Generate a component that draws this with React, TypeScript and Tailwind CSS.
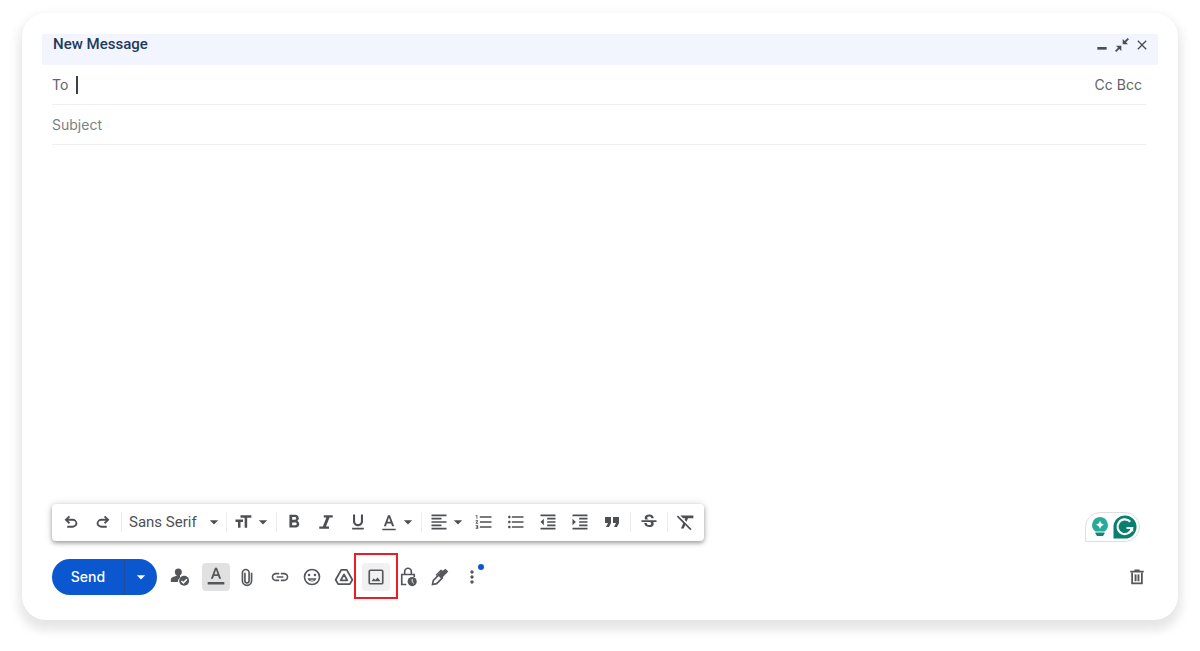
import React from 'react';
import {
  MdArrowDropDown,
  MdClose,
  MdFormatAlignLeft,
  MdFormatBold,
  MdFormatClear,
  MdFormatIndentDecrease,
  MdFormatIndentIncrease,
  MdFormatListBulleted,
  MdFormatListNumbered,
  MdFormatQuote,
  MdFormatSize,
  MdFormatUnderlined,
  MdLink,
  MdMoreVert,
  MdStrikethroughS,
} from 'react-icons/md';

interface IconButtonProps {
  label: string;
  className?: string;
  children: React.ReactNode;
}

const IconButton: React.FC<IconButtonProps> = ({ label, className = 'w-8', children }) => (
  <button type="button" aria-label={label} className={`flex h-7 shrink-0 items-center justify-center ${className}`}>
    {children}
  </button>
);

const Icon: React.FC<{ className?: string; children: React.ReactNode }> = ({ className = 'size-5', children }) => (
  <svg viewBox="0 0 24 24" fill="currentColor" className={`shrink-0 ${className}`} aria-hidden="true">
    {children}
  </svg>
);

const Separator = () => <span className="h-5 w-px shrink-0 bg-[#ececec]" />;

const UndoPath = () => (
  <path d="M7 19.500v-2.500h7.100q1.575 0 2.738-1T18 13.500t-1.162-2.500T14.100 10.200H8.300l2.500 2.500L9 14.500 3.500 9 9 3.500l1.800 1.800L8.300 7.800h5.800q2.700 0 4.400 1.700T20.500 13.500t-2 4.200T14.100 19.500z" />
);

const Header = () => (
  <header className="flex h-[31px] items-start justify-between bg-[#f2f5fd] pr-1.5 pl-[11px]">
    <h1 className="font-['Roboto',sans-serif] text-[15px] leading-5 font-medium text-[#1f3a5c]">New Message</h1>
    <div className="flex h-[22px] items-center text-[#4b4d50]">
      <button type="button" aria-label="Minimize" className="flex w-5 justify-center">
        <Icon className="size-4">
          <path d="M5 15h14v4H5z" />
        </Icon>
      </button>
      <button type="button" aria-label="Exit full screen" className="flex w-5 justify-center">
        <Icon className="size-4">
          <path d="M13 11V3l3 3L20.500 1.500l2 2L18 8l3 3zM11 13v8l-3-3L3.500 22.500l-2-2L6 16l-3-3z" />
        </Icon>
      </button>
      <button type="button" aria-label="Close" className="flex w-5 justify-center">
        <MdClose className="size-4 stroke-current" />
      </button>
    </div>
  </header>
);

const Fields = () => (
  <div className="mr-3 ml-[10px] text-sm text-[#5f6368]">
    <div className="flex h-10 items-center border-b border-[#efefef]">
      <label htmlFor="to">To</label>
      <span className="ml-2 h-[18px] w-0.5 bg-[#3c4043]" />
      <input id="to" type="text" className="min-w-0 flex-1 outline-none" />
      <div className="flex gap-1 pr-1">
        <button type="button">Cc</button>
        <button type="button">Bcc</button>
      </div>
    </div>
    <div className="flex h-10 items-center border-b border-[#efefef]">
      <input
        type="text"
        aria-label="Subject"
        placeholder="Subject"
        className="w-full outline-none placeholder:text-[#7c7f83]"
      />
    </div>
  </div>
);

const FormatToolbar = () => (
  <div
    role="toolbar"
    aria-label="Formatting options"
    className="flex h-[37px] items-center rounded-sm bg-white pr-px pb-px pl-[3px] text-[#4d4f52] shadow-[0_2px_4px_rgba(0,0,0,0.35),0_0_10px_rgba(0,0,0,0.12)]"
  >
    <IconButton label="Undo">
      <Icon className="size-[18px]">
        <UndoPath />
      </Icon>
    </IconButton>
    <IconButton label="Redo" className="mr-0.5 w-8">
      <Icon className="size-[18px] -scale-x-100">
        <UndoPath />
      </Icon>
    </IconButton>
    <Separator />
    <div className="relative">
      <select
        aria-label="Font"
        className="h-7 w-[104px] appearance-none pl-[7px] font-['Roboto',sans-serif] text-[15px] outline-none"
      >
        <option>Sans Serif</option>
      </select>
      <MdArrowDropDown className="pointer-events-none absolute top-1 right-0.5 size-5" />
    </div>
    <Separator />
    <IconButton label="Size" className="w-[49px] pl-0.5">
      <MdFormatSize className="size-5" />
      <MdArrowDropDown className="size-5" />
    </IconButton>
    <Separator />
    <IconButton label="Bold" className="ml-px w-8">
      <MdFormatBold className="size-[22px]" />
    </IconButton>
    <IconButton label="Italic">
      <Icon className="size-[18px]">
        <path d="M9 3h12v3h-4.300L12 18h4v3H3v-3h4.800L12.500 6H9z" />
      </Icon>
    </IconButton>
    <IconButton label="Underline">
      <MdFormatUnderlined className="size-5" />
    </IconButton>
    <IconButton label="Text color" className="w-[47px] pl-0.5">
      <Icon>
        <path d="M4 20h16v2H4zM10.800 4h2.400l5 13h-2.500l-1.200-3.300h-5L8.300 17H5.800zM10.200 11.600h3.600L12 6.700z" />
      </Icon>
      <MdArrowDropDown className="-ml-px size-5" />
    </IconButton>
    <Separator />
    <IconButton label="Align" className="w-[46px] pl-1.5">
      <MdFormatAlignLeft className="size-5" />
      <MdArrowDropDown className="-ml-px size-5" />
    </IconButton>
    <IconButton label="Numbered list">
      <MdFormatListNumbered className="size-5" />
    </IconButton>
    <IconButton label="Bulleted list">
      <MdFormatListBulleted className="size-5" />
    </IconButton>
    <IconButton label="Indent less">
      <MdFormatIndentDecrease className="size-5" />
    </IconButton>
    <IconButton label="Indent more">
      <MdFormatIndentIncrease className="size-5" />
    </IconButton>
    <IconButton label="Quote">
      <MdFormatQuote className="size-6" />
    </IconButton>
    <span className="w-0.5" />
    <Separator />
    <IconButton label="Strikethrough" className="w-9">
      <MdStrikethroughS className="size-5" />
    </IconButton>
    <Separator />
    <IconButton label="Remove formatting" className="w-[35px]">
      <MdFormatClear className="size-[22px]" />
    </IconButton>
  </div>
);

const WritingAssistant = () => (
  <div className="-mb-px flex h-[30px] w-[55px] items-center justify-between rounded-2xl rounded-bl-none border border-[#dcdee2] bg-white pr-0.5 pl-1.5">
    <button type="button" aria-label="Writing ideas">
      <svg viewBox="0 0 16 20" className="h-5 w-4" aria-hidden="true">
        <path d="M8 0a8 8 0 0 1 4.500 14.500h-9A8 8 0 0 1 8 0z" fill="#27ab98" />
        <path d="M3.500 15.500h9v1l-1.500 2.500H5l-1.500-2.500z" fill="#0f8674" />
        <path d="M8 3.500q.8 3.700 4.200 4.200Q8.800 8.400 8 12q-.8-3.600-4.200-4.300Q7.200 7.200 8 3.500z" fill="#fff" />
      </svg>
    </button>
    <button type="button" aria-label="Check writing">
      <svg viewBox="0 0 24 24" className="size-6" aria-hidden="true">
        <path d="M12 .500A11.500 11.500 0 1 1 12 23.500H.500V12A11.500 11.500 0 0 1 12 .500z" fill="#08806f" />
        <path d="M17.200 6.800A7.300 7.300 0 1 0 19 13h-5.500" fill="none" stroke="#fff" strokeWidth="2.200" />
        <path d="M16 13l4.200-1v5z" fill="#fff" />
      </svg>
    </button>
  </div>
);

const ActionBar = () => (
  <div className="flex h-9 items-center text-[#55575a]">
    <div className="flex h-9 overflow-hidden rounded-full bg-[#0b57d0] text-white">
      <button type="button" className="w-[73px] border-r border-[#1d4f9c] text-sm font-medium">
        Send
      </button>
      <button type="button" aria-label="More send options" className="flex w-8 items-center pl-1.5">
        <MdArrowDropDown className="size-5" />
      </button>
    </div>
    <IconButton label="Track recipient" className="mr-1 ml-[7px] w-8">
      <Icon>
        <circle cx="10" cy="6" r="4.200" />
        <path d="M8 8h4v4.500q-2.600 2-2.600 5.500H1v-3q0-2.200 2.500-3L8 10.500z" />
        <circle cx="17" cy="16.500" r="6" />
        <path d="M13.800 16.700l2.300 2.300 4.200-4.400" fill="none" stroke="#fff" strokeWidth="1.800" />
      </Icon>
    </IconButton>
    <IconButton label="Formatting options" className="mr-px ml-0.5 w-7 rounded-sm bg-[#e1e1e1]">
      <Icon>
        <path d="M2 18h20v3H2zM10.800 1h2.400l5 13h-2.500l-1.200-3.300h-5L8.300 14H5.800zM10.200 8.600h3.600L12 3.700z" />
      </Icon>
    </IconButton>
    <IconButton label="Attach files" className="mr-px w-8">
      <Icon>
        <path
          d="M17.500 7v9.500a5.500 5.500 0 0 1-11 0V7a4 4 0 0 1 8 0v9.500a2.500 2.500 0 0 1-5 0V7"
          fill="none"
          stroke="currentColor"
          strokeWidth="2"
        />
      </Icon>
    </IconButton>
    <IconButton label="Insert link">
      <MdLink className="size-5" />
    </IconButton>
    <IconButton label="Insert emoji">
      <Icon>
        <circle cx="12" cy="12" r="9" fill="none" stroke="currentColor" strokeWidth="2" />
        <circle cx="8.500" cy="9.500" r="1.500" />
        <circle cx="15.500" cy="9.500" r="1.500" />
        <path d="M6.800 13.500h10.400a5.400 5.400 0 0 1-10.400 0zM9.200 15.200q2.800 2.500 5.600 0z" fillRule="evenodd" />
      </Icon>
    </IconButton>
    <IconButton label="Insert files using Drive">
      <Icon>
        <g fill="none" stroke="currentColor" strokeWidth="2.200" strokeLinejoin="round">
          <path d="M8.700 3.500h6.600L22 15.300l-3 5.200H5l-3-5.200z" />
          <path d="M12 9l-4 7h8z" />
        </g>
      </Icon>
    </IconButton>
    <div className="relative flex w-8 justify-center">
      <IconButton label="Insert photo" className="w-7 rounded-sm bg-[#f1f1f1]">
        <Icon className="size-[18px]">
          <rect x="3" y="3" width="18" height="18" rx="1.500" fill="none" stroke="currentColor" strokeWidth="2.200" />
          <path d="M6 17.500l3-4 2 2.500 3.200-3.500 3.800 5z" />
        </Icon>
      </IconButton>
      <span className="pointer-events-none absolute -inset-x-1.5 -top-2.5 -bottom-2 z-10 border-2 border-[#ea1d25]" />
    </div>
    <IconButton label="Confidential mode">
      <Icon>
        <path
          d="M10 21H4.500V9h15v3M8 9V5.500a4 4 0 0 1 8 0V9"
          fill="none"
          stroke="currentColor"
          strokeWidth="2"
        />
        <circle cx="17" cy="17.500" r="5.500" />
        <path d="M17 14.500v3.200l2 2" fill="none" stroke="#fff" strokeWidth="1.200" />
      </Icon>
    </IconButton>
    <IconButton label="Insert signature">
      <Icon>
        <path d="M11.500 8.500L4 16l-1 5 5-1 7.500-7.500" fill="none" stroke="currentColor" strokeWidth="2" />
        <path d="M6.500 9.500l6.500-6.500 2.500 1.500L18.500 2l3.500 3.500-8.500 8.500-4-4 3.500-4.500-5 5z" />
      </Icon>
    </IconButton>
    <div className="relative">
      <IconButton label="More options">
        <MdMoreVert className="size-5" />
      </IconButton>
      <span className="absolute top-px right-1 size-1.5 rounded-full bg-[#0b57d0]" />
    </div>
    <IconButton label="Discard draft" className="mr-[5px] ml-auto w-8">
      <Icon className="size-[18px]">
        <path d="M8.500 2h7v1.500H21V6H3V3.500h5.500z" />
        <path d="M5.500 6v14.500h13V6" fill="none" stroke="currentColor" strokeWidth="2.400" />
        <path d="M8.500 8.500h7v9h-7z" opacity=".35" />
        <path d="M9 8.500h2v9H9zM13 8.500h2v9h-2z" />
      </Icon>
    </IconButton>
  </div>
);

export default function App() {
  return (
    <div className="flex min-h-screen bg-white px-[22px] pt-[13px] pb-[31px] font-['Inter',sans-serif]">
      <main className="flex flex-1 flex-col rounded-3xl bg-white px-5 pt-[21px] pb-[25px] shadow-[0_8px_12px_rgba(0,0,0,0.06),0_6px_10px_6px_rgba(0,0,0,0.05)]">
        <Header />
        <Fields />
        <textarea aria-label="Message body" className="mx-[10px] min-h-40 flex-1 resize-none outline-none" />
        <div className="mr-[18px] ml-[10px] flex items-end justify-between">
          <FormatToolbar />
          <WritingAssistant />
        </div>
        <div className="mt-[18px] ml-[10px]">
          <ActionBar />
        </div>
      </main>
    </div>
  );
}
